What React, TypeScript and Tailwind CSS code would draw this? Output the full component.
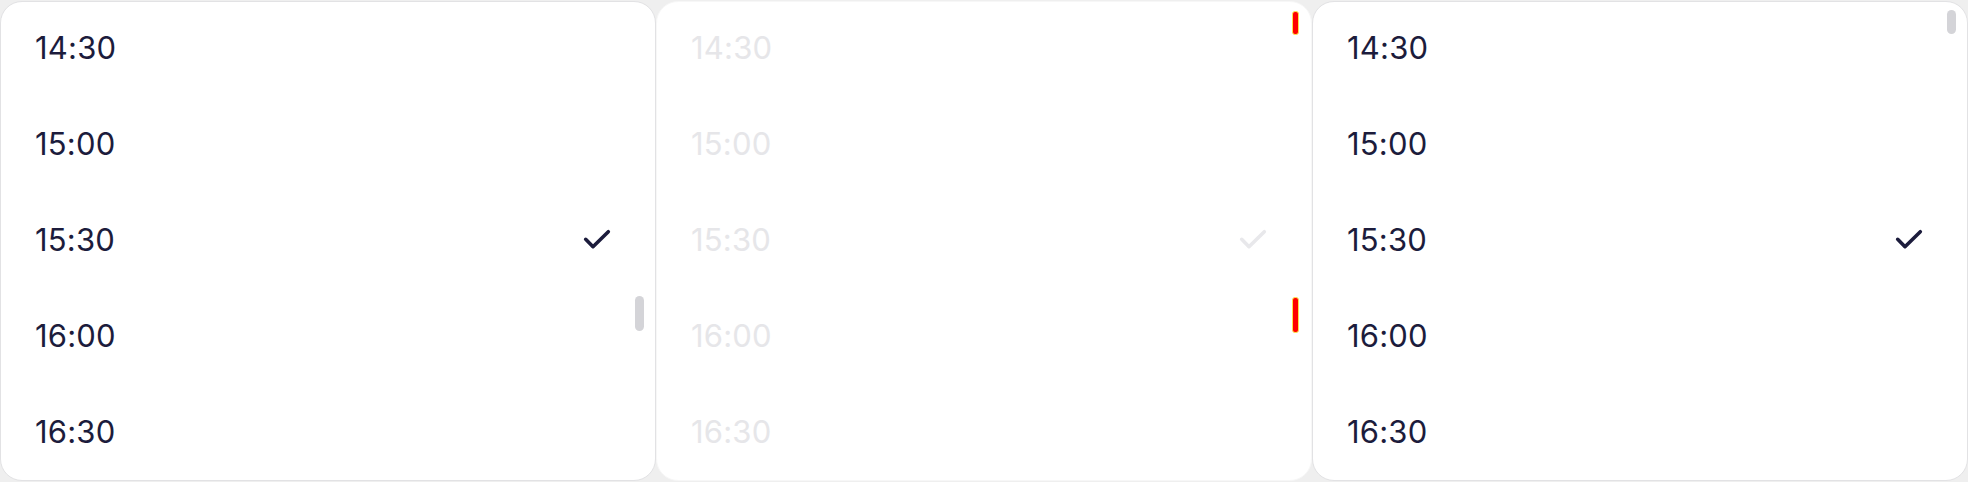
import React from 'react';

const times = ['14:30', '15:00', '15:30', '16:00', '16:30'];
const selected = '15:30';

function CheckMark({ className }: { className?: string }) {
  return (
    <svg viewBox="0 0 28 21" className={className} fill="none" stroke="currentColor" strokeWidth="3.6" strokeLinecap="round" strokeLinejoin="round">
      <path d="M2.7 10.3 10 17.7 25.3 2.7" />
    </svg>
  );
}

interface ListProps {
  faded?: boolean;
  thumbTop: number;
  thumbHeight: number;
}

function TimeList({ faded, thumbTop, thumbHeight }: ListProps) {
  return (
    <div
      className={`relative h-[480px] overflow-hidden rounded-[22px] border bg-white ${
        faded ? 'border-[#f7f7f7]' : 'border-[#e2e2e4]'
      }`}
    >
      {times.map(t => (
        <div key={t} className="flex h-[96px] items-center justify-between pb-[5px] pl-[34px] pr-[44px]">
          <span
            className={`text-[31px] leading-none tracking-[0.2px] ${faded ? 'text-[#e6e6e9]' : 'text-[#1c1c3c]'}`}
            style={{ fontFamily: 'Inter, "Noto Sans", sans-serif' }}
          >
            {t}
          </span>
          {t === selected && <CheckMark className={`h-[21px] w-[28px] ${faded ? 'text-[#e8e8eb]' : 'text-[#1c1c3c]'}`} />}
        </div>
      ))}

      {/* scrollbar thumb */}
      {faded ? (
        <>
          <div className="absolute right-[12px] top-[9px] h-[24px] w-[7px] rounded-[3px] border border-[#ffe14d] bg-[#ff0000]" />
          <div className="absolute right-[12px] top-[295px] h-[36px] w-[7px] rounded-[3px] border border-[#ffe14d] bg-[#ff0000]" />
        </>
      ) : (
        <div
          className="absolute right-[11px] w-[9px] rounded-full bg-[#d4d4d8]"
          style={{ top: thumbTop, height: thumbHeight }}
        />
      )}
    </div>
  );
}

export default function App() {
  return (
    <div className="grid h-[482px] w-[1968px] grid-cols-3 bg-[#efefef] py-px">
      <TimeList thumbTop={294} thumbHeight={35} />
      <TimeList faded thumbTop={9} thumbHeight={24} />
      <TimeList thumbTop={8} thumbHeight={24} />
    </div>
  );
}
